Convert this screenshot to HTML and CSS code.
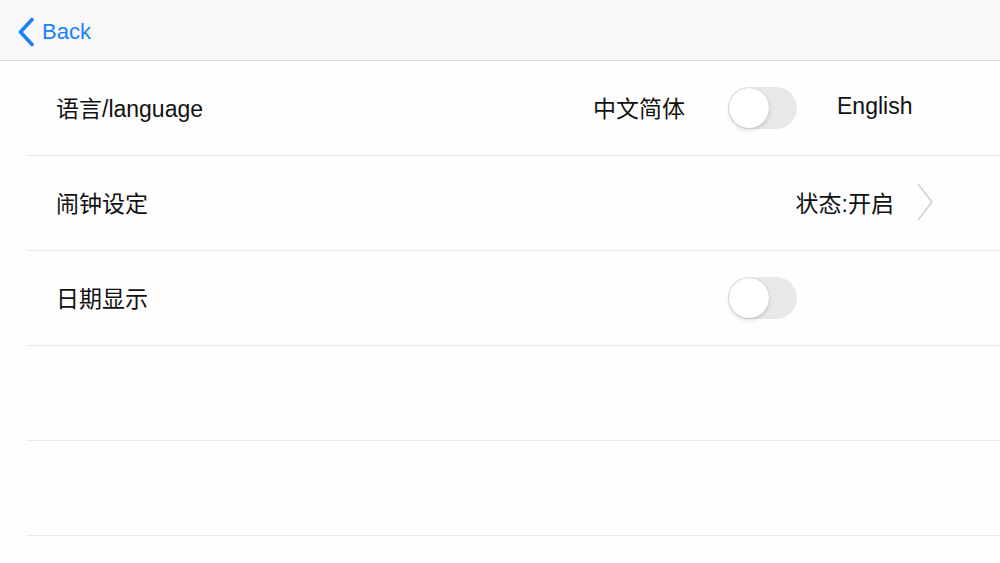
FILE: index.html
```html
<!doctype html>
<html lang="zh-CN">
 <head>
  <meta charset="UTF-8">
  <meta name="viewport" content="width=device-width, initial-scale=1.0">
  <title>设置</title>
  <link rel="stylesheet" href="styles.css">
 </head>
 <body>
  <div class="nav-bar">
    <a class="back" href="#">
      <svg class="back-icon" width="20" height="30" viewBox="0 0 20 30">
        <path d="M15 2.5 L3.5 15 L15 27.5" fill="none" stroke="#1a82fb" stroke-width="3.6" stroke-linecap="round" stroke-linejoin="round"/>
      </svg>
      <span>Back</span>
    </a>
  </div>

  <ul class="settings">
    <li class="row">
      <span class="label">语言/language</span>
      <span class="side-text">中文简体</span>
      <span class="switch"><span class="knob"></span></span>
      <span class="side-label">English</span>
    </li>
    <li class="row row-link">
      <span class="label">闹钟设定</span>
      <span class="status">状态:开启</span>
      <svg class="chevron" width="18" height="40" viewBox="0 0 18 40">
        <path d="M2 2 L16 20 L2 38" fill="none" stroke="#cfcdd2" stroke-width="1.4" stroke-linejoin="round"/>
      </svg>
    </li>
    <li class="row">
      <span class="label">日期显示</span>
      <span class="switch"><span class="knob"></span></span>
      <span class="side-label"></span>
    </li>
    <li class="row"></li>
    <li class="row"></li>
  </ul>
 </body>
</html>
```

FILE: styles.css
```css
body {
    margin: 0;
    background: #fefefe;
    font-family: "Liberation Sans", "Noto Sans CJK SC", sans-serif;
    color: #111;
}
.nav-bar {
    height: 57px;
    padding-top: 3px;
    background: #f8f7f9;
    border-bottom: 1px solid #d9d7dc;
    display: flex;
    align-items: center;
    padding-left: 17px;
}
.back {
    display: flex;
    align-items: center;
    color: #1a82fb;
    text-decoration: none;
    font-size: 22px;
    gap: 5px;
}
.back-icon {
    display: block;
}
.settings {
    list-style: none;
    margin: 0 0 0 27px;
    padding: 0;
}
.row {
    height: 91px;
    padding: 0 89px 3px 29px;
    border-bottom: 1px solid #ebe9ed;
    display: flex;
    align-items: center;
    font-size: 23px;
}
.label {
    margin-right: auto;
}
.side-text {
    margin-right: 43px;
}
.switch {
    position: relative;
    width: 69px;
    height: 42px;
    margin-top: 3px;
    border-radius: 21px;
    background: #e8e7ea;
}
.knob {
    position: absolute;
    left: 1px;
    top: 1px;
    width: 40px;
    height: 40px;
    border-radius: 50%;
    background: #fff;
    box-shadow: 0 2px 4px rgba(0, 0, 0, 0.15), 0 0 1px rgba(0, 0, 0, 0.2);
}
.side-label {
    width: 74px;
    margin-left: 40px;
}
.row-link {
    padding-right: 66px;
}
.chevron {
    margin-left: 22px;
    display: block;
}
```
